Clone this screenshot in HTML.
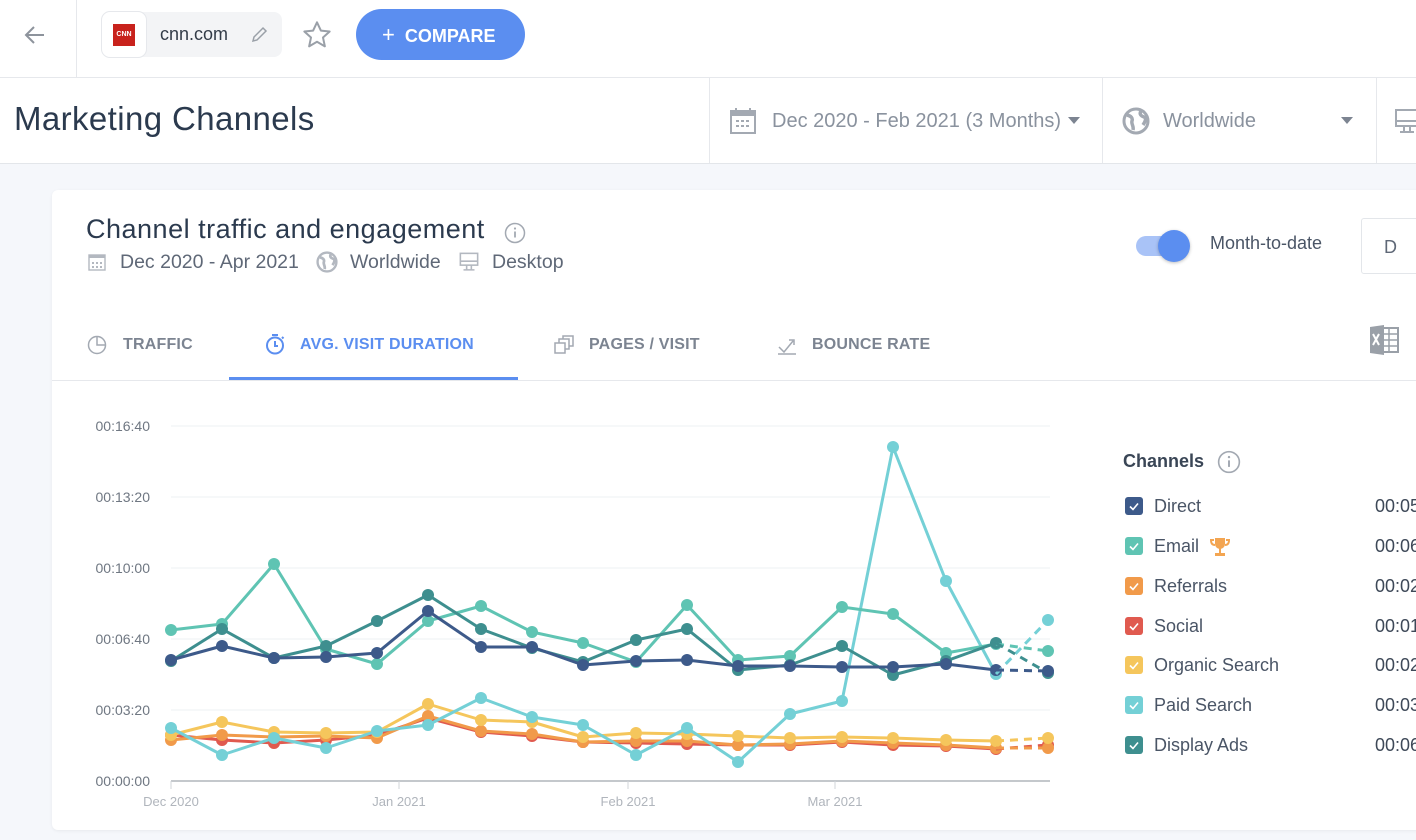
<!DOCTYPE html>
<html><head><meta charset="utf-8"><style>
*{margin:0;padding:0;box-sizing:border-box}
body{width:1416px;height:840px;overflow:hidden;background:#f5f7fb;font-family:"Liberation Sans",sans-serif;position:relative;color:#2b3a4e}
.abs{position:absolute}
.top{left:0;top:0;width:1416px;height:78px;background:#fff;border-bottom:1px solid #e6e8ec}
.hdr{left:0;top:78px;width:1416px;height:86px;background:#fff;border-bottom:1px solid #e3e6ea}
.card{left:52px;top:190px;width:1400px;height:640px;background:#fff;border-radius:6px;box-shadow:0 1px 3px rgba(0,0,0,.06)}
.tab{top:336px;font-size:16px;font-weight:bold;color:#7c8491;letter-spacing:.2px}
.leg{left:1154px;font-size:18px;color:#4a5566}
.cb{position:absolute;left:1125px;width:18px;height:18px;border-radius:3px}
.val{left:1375px;font-size:18px;color:#3e4958}
.gray{color:#8a929e}
</style></head><body>
<div class="abs top"></div>
<svg class="abs" style="left:22px;top:22px" width="26" height="26" viewBox="0 0 26 26"><path d="M22 13H4M12 5l-8 8 8 8" fill="none" stroke="#8d939c" stroke-width="2"/></svg>
<div class="abs" style="left:76px;top:0;width:1px;height:77px;background:#e6e8ec"></div>
<div class="abs" style="left:101px;top:12px;width:181px;height:45px;background:#f3f4f6;border-radius:8px"></div>
<div class="abs" style="left:101px;top:11px;width:46px;height:47px;background:#fff;border:1px solid #e6e8ec;border-radius:9px"></div>
<div class="abs" style="left:113px;top:24px;width:22px;height:22px;background:#c8221c;color:#fff;font-size:7px;font-weight:bold;line-height:22px;text-align:center">CNN</div>
<div class="abs" style="left:160px;top:24px;font-size:18px;color:#333c48">cnn.com</div>
<svg class="abs" style="left:250px;top:24px" width="20" height="20" viewBox="0 0 20 20"><path d="M3 17l1-4 9-9 3 3-9 9z" fill="none" stroke="#9aa0a8" stroke-width="1.5"/></svg>
<svg class="abs" style="left:301px;top:19px" width="32" height="32" viewBox="0 0 24 24"><path d="M12 2.5l2.9 6.2 6.6.7-5 4.5 1.4 6.6L12 17.1l-5.9 3.4 1.4-6.6-5-4.5 6.6-.7z" fill="none" stroke="#9aa0a8" stroke-width="1.5" stroke-linejoin="round"/></svg>
<div class="abs" style="left:356px;top:9px;width:169px;height:51px;background:#5b8ef0;border-radius:26px;color:#fff;font-size:18px;font-weight:bold;line-height:51px;padding-left:26px"><span style="font-weight:normal;font-size:22px">+</span>&nbsp; COMPARE</div>

<div class="abs hdr"></div>
<div class="abs" style="left:14px;top:100px;font-size:33px;letter-spacing:.4px;color:#2b3a4e">Marketing Channels</div>
<div class="abs" style="left:709px;top:78px;width:1px;height:85px;background:#e6e8ec"></div>
<div class="abs" style="left:1102px;top:78px;width:1px;height:85px;background:#e6e8ec"></div>
<div class="abs" style="left:1376px;top:78px;width:1px;height:85px;background:#e6e8ec"></div>
<svg class="abs" style="left:728px;top:106px" width="30" height="30" viewBox="0 0 30 30"><rect x="3" y="5" width="24" height="22" fill="none" stroke="#a3a9b2" stroke-width="2"/><rect x="3" y="5" width="24" height="5" fill="#a3a9b2"/><path d="M8 2v5M22 2v5" stroke="#a3a9b2" stroke-width="2"/><g fill="#a3a9b2"><rect x="8" y="14" width="3" height="2"/><rect x="13" y="14" width="3" height="2"/><rect x="18" y="14" width="3" height="2"/><rect x="8" y="19" width="3" height="2"/><rect x="13" y="19" width="3" height="2"/><rect x="18" y="19" width="3" height="2"/></g></svg>
<div class="abs gray" style="left:772px;top:110px;font-size:20px">Dec 2020 - Feb 2021 (3 Months)</div>
<div class="abs" style="left:1068px;top:117px;border:6px solid transparent;border-top:7px solid #7c8491"></div>
<svg class="abs" style="left:1122px;top:107px" width="28" height="28" viewBox="0 0 28 28"><circle cx="14" cy="14" r="12" fill="none" stroke="#a3a9b2" stroke-width="3"/><path d="M5 8c4 1 6 3 5 6s2 5 1 9M19 4c-2 3 0 5 3 6s1 5-1 8" fill="none" stroke="#a3a9b2" stroke-width="3.5"/></svg>
<div class="abs gray" style="left:1163px;top:110px;font-size:20px">Worldwide</div>
<div class="abs" style="left:1341px;top:117px;border:6px solid transparent;border-top:7px solid #7c8491"></div>
<svg class="abs" style="left:1394px;top:107px" width="26" height="28" viewBox="0 0 26 28"><rect x="2" y="3" width="24" height="16" fill="none" stroke="#a3a9b2" stroke-width="2"/><path d="M2 14h24M10 19v5M16 19v5M6 25h14" stroke="#a3a9b2" stroke-width="2"/></svg>

<div class="abs card"></div>
<div class="abs" style="left:86px;top:214px;font-size:27px;letter-spacing:.5px;color:#2b3a4e">Channel traffic and engagement</div>
<svg class="abs" style="left:504px;top:222px" width="22" height="22" viewBox="0 0 22 22"><circle cx="11" cy="11" r="9.5" fill="none" stroke="#a3a9b2" stroke-width="1.5"/><path d="M11 9.5v6" stroke="#a3a9b2" stroke-width="1.8"/><circle cx="11" cy="6.5" r="1.1" fill="#a3a9b2"/></svg>
<svg class="abs" style="left:87px;top:252px" width="20" height="20" viewBox="0 0 20 20"><rect x="2" y="3" width="16" height="15" fill="none" stroke="#b3b8c0" stroke-width="1.4"/><rect x="2" y="3" width="16" height="3" fill="#b3b8c0"/><g fill="#b3b8c0"><rect x="5" y="10" width="2" height="2"/><rect x="9" y="10" width="2" height="2"/><rect x="13" y="10" width="2" height="2"/><rect x="5" y="14" width="2" height="2"/><rect x="9" y="14" width="2" height="2"/><rect x="13" y="14" width="2" height="2"/></g></svg>
<div class="abs" style="left:120px;top:251px;font-size:19.5px;color:#5f6877">Dec 2020 - Apr 2021</div>
<svg class="abs" style="left:316px;top:251px" width="22" height="22" viewBox="0 0 28 28"><circle cx="14" cy="14" r="12" fill="none" stroke="#b3b8c0" stroke-width="3"/><path d="M5 8c4 1 6 3 5 6s2 5 1 9M19 4c-2 3 0 5 3 6s1 5-1 8" fill="none" stroke="#b3b8c0" stroke-width="3.5"/></svg>
<div class="abs" style="left:350px;top:251px;font-size:19.5px;color:#5f6877">Worldwide</div>
<svg class="abs" style="left:458px;top:251px" width="22" height="22" viewBox="0 0 26 28"><rect x="2" y="3" width="22" height="15" fill="none" stroke="#b3b8c0" stroke-width="2"/><path d="M2 13h22M10 18v5M16 18v5M6 24h14" stroke="#b3b8c0" stroke-width="2"/></svg>
<div class="abs" style="left:492px;top:251px;font-size:19.5px;color:#5f6877">Desktop</div>

<div class="abs" style="left:1136px;top:236px;width:52px;height:20px;background:#a9c3f7;border-radius:10px"></div>
<div class="abs" style="left:1158px;top:230px;width:32px;height:32px;background:#5b8ef0;border-radius:50%;box-shadow:0 1px 3px rgba(0,0,0,.25)"></div>
<div class="abs" style="left:1210px;top:233px;font-size:18px;color:#4a5566">Month-to-date</div>
<div class="abs" style="left:1361px;top:218px;width:80px;height:56px;border:1px solid #e3e6ea;border-radius:3px;font-size:18px;color:#5f6877;line-height:56px;padding-left:22px">D</div>

<svg class="abs" style="left:86px;top:334px" width="22" height="22" viewBox="0 0 22 22"><circle cx="11" cy="11" r="8.5" fill="none" stroke="#a3a9b2" stroke-width="1.5"/><path d="M11 2.5V11h8.5" fill="none" stroke="#a3a9b2" stroke-width="1.5"/></svg>
<div class="abs tab" style="left:123px">TRAFFIC</div>
<svg class="abs" style="left:263px;top:332px" width="24" height="24" viewBox="0 0 24 24"><circle cx="12" cy="13.5" r="8" fill="none" stroke="#5b8ef0" stroke-width="2"/><path d="M12 9v5h3M9 3h6M19 5l1.5 1.5" fill="none" stroke="#5b8ef0" stroke-width="2"/></svg>
<div class="abs tab" style="left:300px;color:#5b8ef0">AVG. VISIT DURATION</div>
<svg class="abs" style="left:553px;top:334px" width="22" height="22" viewBox="0 0 22 22"><rect x="2" y="9" width="10" height="10" fill="none" stroke="#a3a9b2" stroke-width="1.5"/><path d="M6 9V5h10v10h-4M10 5V2h10v10h-4" fill="none" stroke="#a3a9b2" stroke-width="1.5"/></svg>
<div class="abs tab" style="left:589px">PAGES / VISIT</div>
<svg class="abs" style="left:776px;top:334px" width="22" height="22" viewBox="0 0 22 22"><path d="M3 13l5 5 9-11M13 6h5v5M2 20h18" fill="none" stroke="#a3a9b2" stroke-width="1.5"/></svg>
<div class="abs tab" style="left:812px">BOUNCE RATE</div>
<svg class="abs" style="left:1368px;top:323px" width="34" height="34" viewBox="0 0 34 34"><rect x="12" y="5" width="18" height="24" fill="none" stroke="#9aa0a8" stroke-width="2"/><path d="M12 11h18M12 17h18M12 23h18M21 5v24" stroke="#9aa0a8" stroke-width="1.5"/><path d="M2 4l14-2v30L2 30z" fill="#9aa0a8"/><path d="M5 11l6 11M11 11l-6 11" stroke="#fff" stroke-width="2"/></svg>
<div class="abs" style="left:229px;top:377px;width:289px;height:3px;background:#5b8ef0"></div>
<div class="abs" style="left:52px;top:380px;width:1364px;height:1px;background:#e6e8ec"></div>

<svg class="abs" style="left:0;top:0" width="1416" height="840">
<defs>
<marker id="m1" markerUnits="userSpaceOnUse" markerWidth="16" markerHeight="16" refX="8" refY="8"><circle cx="8" cy="8" r="6" fill="#3d5a8a"/></marker>
<marker id="m2" markerUnits="userSpaceOnUse" markerWidth="16" markerHeight="16" refX="8" refY="8"><circle cx="8" cy="8" r="6" fill="#5fc4b3"/></marker>
<marker id="m3" markerUnits="userSpaceOnUse" markerWidth="16" markerHeight="16" refX="8" refY="8"><circle cx="8" cy="8" r="6" fill="#3e8f8f"/></marker>
<marker id="m4" markerUnits="userSpaceOnUse" markerWidth="16" markerHeight="16" refX="8" refY="8"><circle cx="8" cy="8" r="6" fill="#74d0d6"/></marker>
<marker id="m5" markerUnits="userSpaceOnUse" markerWidth="16" markerHeight="16" refX="8" refY="8"><circle cx="8" cy="8" r="6" fill="#f5c65c"/></marker>
<marker id="m6" markerUnits="userSpaceOnUse" markerWidth="16" markerHeight="16" refX="8" refY="8"><circle cx="8" cy="8" r="6" fill="#f19a4a"/></marker>
<marker id="m7" markerUnits="userSpaceOnUse" markerWidth="16" markerHeight="16" refX="8" refY="8"><circle cx="8" cy="8" r="6" fill="#e05a4f"/></marker>
</defs>
<g stroke="#eef0f3" stroke-width="1"><line x1="171" y1="426" x2="1050" y2="426"/><line x1="171" y1="497" x2="1050" y2="497"/><line x1="171" y1="568" x2="1050" y2="568"/><line x1="171" y1="639" x2="1050" y2="639"/><line x1="171" y1="710" x2="1050" y2="710"/></g>
<line x1="171" y1="781" x2="1050" y2="781" stroke="#b0b5bc" stroke-width="1.5"/>
<g stroke="#d0d4da"><line x1="171" y1="781" x2="171" y2="789"/><line x1="399" y1="781" x2="399" y2="789"/><line x1="628" y1="781" x2="628" y2="789"/><line x1="835" y1="781" x2="835" y2="789"/></g>
<g font-family="Liberation Sans" font-size="14" fill="#6f7782" text-anchor="end"><text x="150" y="431">00:16:40</text><text x="150" y="502">00:13:20</text><text x="150" y="573">00:10:00</text><text x="150" y="644">00:06:40</text><text x="150" y="715">00:03:20</text><text x="150" y="786">00:00:00</text></g>
<g font-family="Liberation Sans" font-size="13" fill="#b0b5bc" text-anchor="middle"><text x="171" y="806">Dec 2020</text><text x="399" y="806">Jan 2021</text><text x="628" y="806">Feb 2021</text><text x="835" y="806">Mar 2021</text></g>
<g fill="none" stroke-width="3" stroke-linejoin="round">
<polyline stroke="#e05a4f" marker-start="url(#m7)" marker-mid="url(#m7)" marker-end="url(#m7)" points="171,735 222,740 274,743 326,740 377,735 428,718 481,732 532,736 583,742 636,743 687,744 738,745 790,745 842,742 893,745 946,746 996,749"/>
<polyline stroke="#f19a4a" marker-start="url(#m6)" marker-mid="url(#m6)" marker-end="url(#m6)" points="171,740 222,735 274,737 326,736 377,738 428,716 481,731 532,734 583,742 636,741 687,741 738,745 790,744 842,741 893,743 946,745 996,748"/>
<polyline stroke="#f5c65c" marker-start="url(#m5)" marker-mid="url(#m5)" marker-end="url(#m5)" points="171,735 222,722 274,732 326,733 377,732 428,704 481,720 532,722 583,737 636,733 687,734 738,736 790,738 842,737 893,738 946,740 996,741"/>
<polyline stroke="#74d0d6" marker-start="url(#m4)" marker-mid="url(#m4)" marker-end="url(#m4)" points="171,728 222,755 274,738 326,748 377,731 428,725 481,698 532,717 583,725 636,755 687,728 738,762 790,714 842,701 893,447 946,581 996,674"/>
<polyline stroke="#5fc4b3" marker-start="url(#m2)" marker-mid="url(#m2)" marker-end="url(#m2)" points="171,630 222,624 274,564 326,649 377,664 428,621 481,606 532,632 583,643 636,662 687,605 738,660 790,656 842,607 893,614 946,653 996,644"/>
<polyline stroke="#3e8f8f" marker-start="url(#m3)" marker-mid="url(#m3)" marker-end="url(#m3)" points="171,661 222,629 274,658 326,646 377,621 428,595 481,629 532,648 583,662 636,640 687,629 738,670 790,665 842,646 893,675 946,661 996,643"/>
<polyline stroke="#3d5a8a" marker-start="url(#m1)" marker-mid="url(#m1)" marker-end="url(#m1)" points="171,660 222,646 274,658 326,657 377,653 428,611 481,647 532,647 583,665 636,661 687,660 738,666 790,666 842,667 893,667 946,664 996,670"/>
</g>
<g fill="none" stroke-width="3" stroke-dasharray="8,6">
<polyline stroke="#e05a4f" marker-end="url(#m7)" points="996,749 1048,745"/>
<polyline stroke="#f19a4a" marker-end="url(#m6)" points="996,748 1048,748"/>
<polyline stroke="#f5c65c" marker-end="url(#m5)" points="996,741 1048,738"/>
<polyline stroke="#74d0d6" marker-end="url(#m4)" points="996,674 1048,620"/>
<polyline stroke="#5fc4b3" marker-end="url(#m2)" points="996,644 1048,651"/>
<polyline stroke="#3e8f8f" marker-end="url(#m3)" points="996,643 1048,673"/>
<polyline stroke="#3d5a8a" marker-end="url(#m1)" points="996,670 1048,671"/>
</g>
</svg>

<div class="abs" style="left:1123px;top:451px;font-size:18px;font-weight:bold;color:#3a4656">Channels</div>
<svg class="abs" style="left:1217px;top:450px" width="24" height="24" viewBox="0 0 22 22"><circle cx="11" cy="11" r="9.5" fill="none" stroke="#a3a9b2" stroke-width="1.5"/><path d="M11 9.5v6" stroke="#a3a9b2" stroke-width="1.8"/><circle cx="11" cy="6.5" r="1.1" fill="#a3a9b2"/></svg>
<div class="cb" style="top:497px;background:#3d5a8a"></div>
<div class="cb" style="top:537px;background:#5fc4b3"></div>
<div class="cb" style="top:577px;background:#f19a4a"></div>
<div class="cb" style="top:617px;background:#e05a4f"></div>
<div class="cb" style="top:656px;background:#f5c65c"></div>
<div class="cb" style="top:696px;background:#74d0d6"></div>
<div class="cb" style="top:736px;background:#3e8f8f"></div>
<svg class="abs" style="left:1125px;top:497px" width="18" height="260"><g fill="none" stroke="#fff" stroke-width="1.6"><path d="M5 9.5l3 3 5-6"/><path d="M5 49.5l3 3 5-6"/><path d="M5 89.5l3 3 5-6"/><path d="M5 129.5l3 3 5-6"/><path d="M5 168.5l3 3 5-6"/><path d="M5 208.5l3 3 5-6"/><path d="M5 248.5l3 3 5-6"/></g></svg>
<div class="abs leg" style="top:496px">Direct</div>
<div class="abs leg" style="top:536px">Email</div>
<svg class="abs" style="left:1208px;top:536px" width="24" height="22" viewBox="0 0 24 22"><path d="M7 2h10v6a5 5 0 01-10 0z" fill="#f3a552"/><path d="M6 4H3c0 4 2 5 4 5M18 4h3c0 4-2 5-4 5" fill="none" stroke="#f3a552" stroke-width="2"/><rect x="11" y="12" width="2" height="5" fill="#f3a552"/><rect x="7" y="17" width="10" height="3" fill="#f3a552"/></svg>
<div class="abs leg" style="top:576px">Referrals</div>
<div class="abs leg" style="top:616px">Social</div>
<div class="abs leg" style="top:655px">Organic Search</div>
<div class="abs leg" style="top:695px">Paid Search</div>
<div class="abs leg" style="top:735px">Display Ads</div>
<div class="abs val" style="top:496px">00:05:21</div>
<div class="abs val" style="top:536px">00:06:12</div>
<div class="abs val" style="top:576px">00:02:05</div>
<div class="abs val" style="top:616px">00:01:58</div>
<div class="abs val" style="top:655px">00:02:16</div>
<div class="abs val" style="top:695px">00:03:40</div>
<div class="abs val" style="top:735px">00:06:01</div>
</body></html>
